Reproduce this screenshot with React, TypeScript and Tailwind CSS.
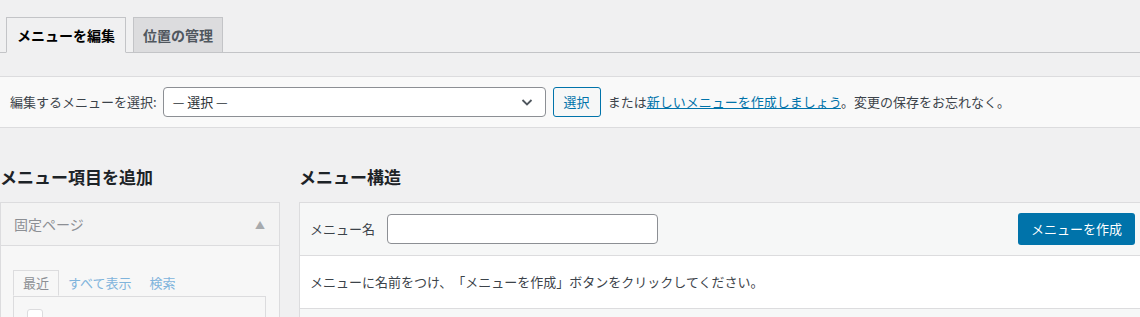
import React from "react";

const font = { fontFamily: '"Noto Sans CJK JP", "Noto Sans", sans-serif' };

const App = () => {
  return (
    <div
      className="w-[1140px] h-[317px] overflow-hidden bg-[#f0f0f1] text-[13px] text-[#3c434a] [text-spacing-trim:space-all]"
      style={font}
    >
      {/* タブ */}
      <div className="flex border-b border-[#c3c4c7] pl-[6px] pt-[17px]">
        <div className="-mb-px flex h-[36px] items-center border border-[#c3c4c7] border-b-[#f0f0f1] bg-[#f0f0f1] px-[10px] text-[14px] font-bold text-black">
          メニューを編集
        </div>
        <div className="-mb-px ml-[7px] flex h-[36px] items-center border border-[#c3c4c7] bg-[#dcdcde] px-[9px] text-[14px] font-bold text-[#50575e]">
          位置の管理
        </div>
      </div>

      {/* メニュー選択 */}
      <div className="mt-[23px] flex h-[52px] items-center border-y border-[#dcdcde] bg-[#f9f9f9] pl-[10px]">
        <span className="mr-[6px]">編集するメニューを選択:</span>
        <div className="flex h-[30px] w-[383px] items-center justify-between rounded-[4px] border border-[#8c8f94] bg-white pl-[9px] pr-[10px] text-[#2c3338]">
          <span>— 選択 —</span>
          <svg width="16" height="16" viewBox="0 0 16 16" fill="none">
            <path d="M3.5 6l4.5 4.5L12.5 6" stroke="#50575e" strokeWidth="1.8" />
          </svg>
        </div>
        <div className="ml-[7px] flex h-[30px] w-[48px] items-center justify-center rounded-[3px] border border-[#0073aa] bg-[#f6f7f7] text-[#0073aa]">
          選択
        </div>
        <span className="ml-[7px]">
          または
          <a className="text-[#0073aa] underline">新しいメニューを作成しましょう</a>
          。変更の保存をお忘れなく。
        </span>
      </div>

      <div className="flex pt-[36px]">
        {/* メニュー項目を追加 */}
        <div className="w-[280px] shrink-0">
          <h2 className="mb-[13px] h-[25px] text-[17px] font-bold leading-[25px] text-[#1d2327]">
            メニュー項目を追加
          </h2>
          <div className="border border-[#dcdcde]">
            <div className="flex h-[43px] items-center justify-between border-b border-[#dcdcde] bg-[#f3f3f3] pl-[13px] pr-[14px] text-[14px] text-[#8c8f94]">
              <span>固定ページ</span>
              <span className="text-[10px] text-[#a7aaad]">▲</span>
            </div>
            <div className="bg-[#f7f7f7] pl-[12px] pr-[13px] pt-[24px]">
              <div className="flex">
                <div className="-mb-px flex h-[26px] items-center border border-[#dcdcde] border-b-[#f7f7f7] bg-[#f7f7f7] px-[9px] text-[#8c8f94]">
                  最近
                </div>
                <span className="flex h-[26px] items-center px-[9px] text-[#7fb4dc]">すべて表示</span>
                <span className="flex h-[26px] items-center px-[9px] text-[#7fb4dc]">検索</span>
              </div>
              <div className="h-[40px] border border-[#dcdcde] px-[13px] pt-[12px]">
                <div className="h-[16px] w-[16px] rounded-[3px] border border-[#dcdcde] bg-white" />
              </div>
            </div>
          </div>
        </div>

        {/* メニュー構造 */}
        <div className="ml-[19px] w-[847px] shrink-0">
          <h2 className="mb-[13px] h-[25px] text-[17px] font-bold leading-[25px] text-[#1d2327]">
            メニュー構造
          </h2>
          <div className="border border-[#dcdcde] bg-[#f6f7f7]">
            <div className="flex h-[53px] items-center border-b border-[#dcdcde] px-[10px]">
              <span className="mr-[12px]">メニュー名</span>
              <div className="h-[30px] w-[271px] rounded-[4px] border border-[#8c8f94] bg-white" />
              <div className="ml-auto flex h-[32px] w-[117px] items-center justify-center rounded-[3px] bg-[#0073aa] text-white">
                メニューを作成
              </div>
            </div>
            <div className="flex h-[53px] items-center border-b border-[#dcdcde] bg-white px-[10px]">
              メニューに名前をつけ、「メニューを作成」ボタンをクリックしてください。
            </div>
            <div className="h-[40px]" />
          </div>
        </div>
      </div>
    </div>
  );
};

export default App;
